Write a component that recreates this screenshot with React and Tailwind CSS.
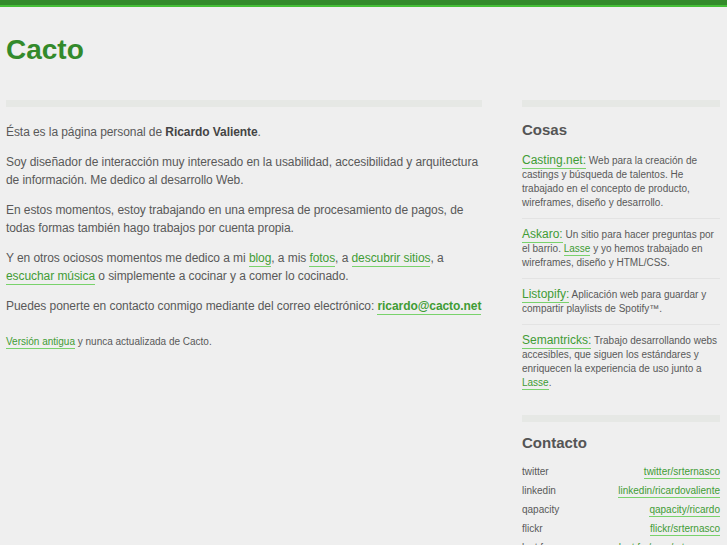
import React from "react";

const L = ({ children, bold }) => (
  <a
    href="#"
    className={
      "text-[#3f9c35] border-b border-[#79d26c] pb-px no-underline " +
      (bold ? "font-bold" : "")
    }
  >
    {children}
  </a>
);

const Item = ({ name, children, first }) => (
  <li className={"py-[8px] " + (first ? "" : "border-t border-[#e3e3e3]")}>
    <p className="text-[10px] leading-[14px]">
      <span className="text-[12px]">
        <L>{name}:</L>
      </span>{" "}
      {children}
    </p>
  </li>
);

const contacts = [
  ["twitter", "twitter/srternasco"],
  ["linkedin", "linkedin/ricardovaliente"],
  ["qapacity", "qapacity/ricardo"],
  ["flickr", "flickr/srternasco"],
  ["last.fm", "last.fm/user/srternasco"],
];

export default function App() {
  return (
    <div
      className="min-h-screen bg-[#efefef] text-[#595959]"
      style={{ fontFamily: '"Liberation Sans", Arial, sans-serif' }}
    >
      <div className="h-[5px] bg-[#338a2b]" />
      <div className="h-[2px] bg-[#45bf37]" />
      <div className="pl-[6px] pr-[7px]">
        <h1 className="mt-[26px] text-[28px] leading-[34px] font-bold text-[#338a2b]">
          Cacto
        </h1>
        <div className="mt-[33px] flex gap-[40px]">
          <div className="w-[476px] shrink-0">
            <div className="h-[7px] bg-[#e6e8e5]" />
            <div className="mt-[16px] text-[12px] leading-[18px] tracking-[-0.07px]">
              <p>
                Ésta es la página personal de{" "}
                <strong className="text-[#444]">Ricardo Valiente</strong>.
              </p>
              <p className="mt-[12px]">
                Soy diseñador de interacción muy interesado en la usabilidad,
                accesibilidad y arquitectura de información. Me dedico al
                desarrollo Web.
              </p>
              <p className="mt-[12px]">
                En estos momentos, estoy trabajando en una empresa de
                procesamiento de pagos, de todas formas también hago trabajos
                por cuenta propia.
              </p>
              <p className="mt-[12px]">
                Y en otros ociosos momentos me dedico a mi <L>blog</L>, a mis{" "}
                <L>fotos</L>, a <L>descubrir sitios</L>, a{" "}
                <L>escuchar música</L> o simplemente a cocinar y a comer lo
                cocinado.
              </p>
              <p className="mt-[12px] whitespace-nowrap">
                Puedes ponerte en contacto conmigo mediante del correo
                electrónico: <L bold>ricardo@cacto.net</L>
              </p>
              <p className="mt-[20px] text-[10px] leading-[14px] tracking-normal">
                <L>Versión antigua</L> y nunca actualizada de Cacto.
              </p>
            </div>
          </div>
          <div className="w-[198px] shrink-0">
            <div className="h-[7px] bg-[#e6e8e5]" />
            <h2 className="mt-[13px] text-[15px] leading-[20px] font-bold text-[#555]">
              Cosas
            </h2>
            <ul className="mt-[5px]">
              <Item name="Casting.net" first>
                Web para la creación de castings y búsqueda de talentos. He
                trabajado en el concepto de producto, wireframes, diseño y
                desarrollo.
              </Item>
              <Item name="Askaro">
                Un sitio para hacer preguntas por el barrio. <L>Lasse</L> y yo
                hemos trabajado en wireframes, diseño y HTML/CSS.
              </Item>
              <Item name="Listopify">
                Aplicación web para guardar y compartir playlists de Spotify™.
              </Item>
              <Item name="Semantricks">
                Trabajo desarrollando webs accesibles, que siguen los estándares
                y enriquecen la experiencia de uso junto a <L>Lasse</L>.
              </Item>
            </ul>
            <div className="mt-[17px] h-[7px] bg-[#e6e8e5]" />
            <h2 className="mt-[11px] text-[15px] leading-[20px] font-bold text-[#555]">
              Contacto
            </h2>
            <ul className="mt-[9px] text-[10px]">
              {contacts.map(([k, v]) => (
                <li key={k} className="flex justify-between h-[19px] leading-[19px]">
                  <span>{k}</span>
                  <span className="leading-[14px] pt-[3px]">
                    <L>{v}</L>
                  </span>
                </li>
              ))}
            </ul>
          </div>
        </div>
      </div>
    </div>
  );
}
